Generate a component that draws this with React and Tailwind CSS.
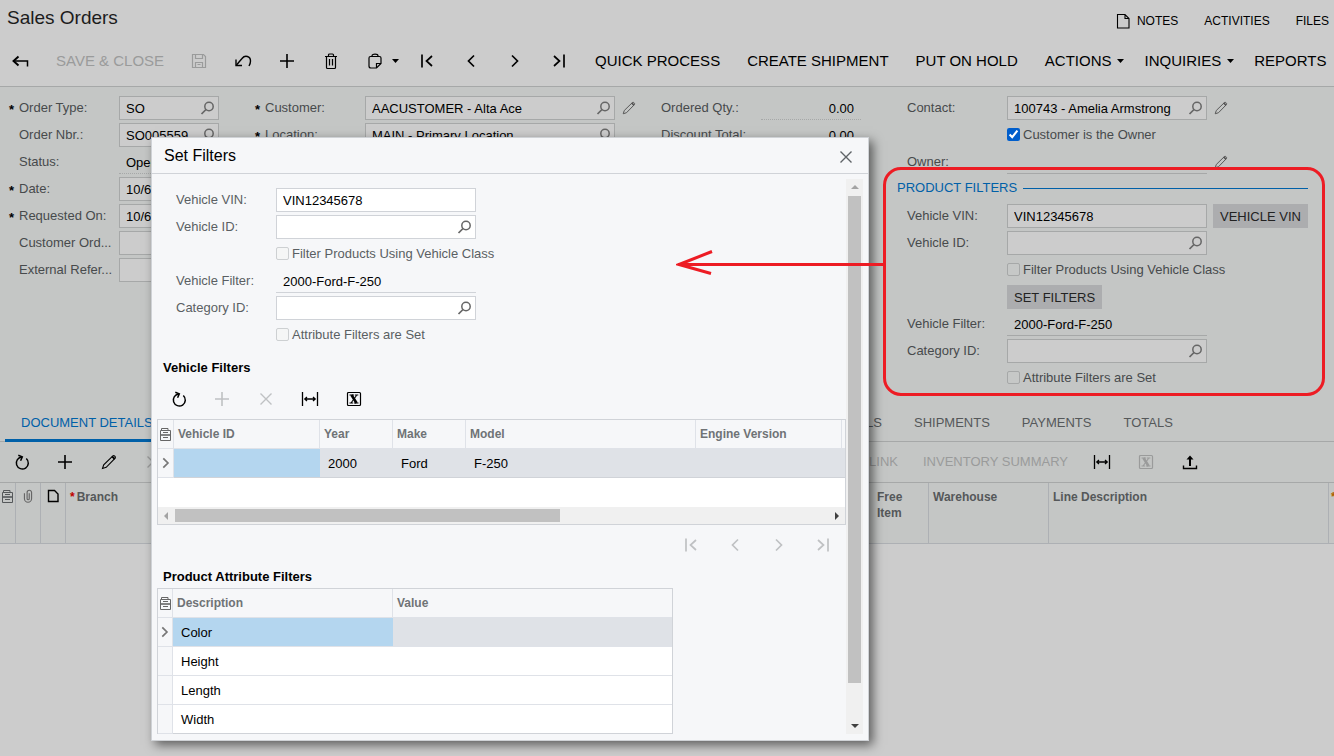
import React, { useId } from "react";

const ICONS = {
  back: (
    <>
      <path d="M2.500 9h14v5.500" strokeWidth="1.500" />
      <path d="M7.500 4.500L2.500 9l5 4.500" strokeWidth="1.900" />
    </>
  ),
  save: (
    <>
      <path d="M2.500 2.500h11l2 2v11h-13z" />
      <path d="M5.500 2.500v4h7v-4M5.500 15.500v-5h7v5M7.500 12.500h3" />
    </>
  ),
  undo: (
    <>
      <path d="M2 7.500v6h6" strokeWidth="1.400" />
      <path d="M2.500 13L8 6.500c3-3.800 8.500-2.300 8.500 2.500 0 2-.6 3.500-1.500 5" strokeWidth="1.400" />
    </>
  ),
  plus: <path d="M9 2v14M2 9h14" strokeWidth="1.600" />,
  trash: (
    <>
      <path d="M3 4.500h12M6.500 4.500V3a1 1 0 0 1 1-1h3a1 1 0 0 1 1 1v1.500M4.500 4.500v11a1 1 0 0 0 1 1h7a1 1 0 0 0 1-1v-11" />
      <path d="M7.500 7v6.500M10.500 7v6.500" />
    </>
  ),
  clipboard: (
    <>
      <path d="M6 4.500V3.800C6 1.500 12 1.500 12 3.800v.7zM6 4.500H4.500a1.500 1.500 0 0 0-1.500 1.500v8a2 2 0 0 0 2 2h5.500L15 11.500V6a1.500 1.500 0 0 0-1.500-1.500H12" />
      <path d="M10.500 16v-4.500H15" />
    </>
  ),
  first: <path d="M4 2.500v13M14 4L8.500 9l5.500 5" strokeWidth="1.700" />,
  prev: <path d="M12 3.500L6.500 9l5.500 5.500" strokeWidth="1.700" />,
  next: <path d="M6 3.500L11.500 9 6 14.500" strokeWidth="1.700" />,
  last: <path d="M14 2.500v13M4 4l5.500 5L4 14" strokeWidth="1.700" />,
  refresh: (
    <>
      <path d="M13.300 5.500A6 6 0 1 1 9 4" strokeWidth="1.500" />
      <path d="M5.300 2.300L9.300 3.900 7.600 7.800" strokeWidth="1.500" />
    </>
  ),
  pencil: (
    <>
      <path d="M2.500 15.500l1.200-3.700 9.200-9c1-.9 3.200 1.100 2.300 2.300L6.200 14.300z" strokeWidth="1.100" />
      <path d="M12 3.300l2.700 2.700" strokeWidth="1.800" />
    </>
  ),
  x: <path d="M3.500 3.500l11 11M14.500 3.500l-11 11" strokeWidth="1.400" />,
  fit: (
    <>
      <path d="M1.500 2v14M16.500 2v14" strokeWidth="1.300" />
      <path d="M3.500 9h11M6 7L3.800 9 6 11M12 7l2.200 2L12 11" strokeWidth="1.300" />
    </>
  ),
  excel: (
    <>
      <rect x="2.500" y="2.500" width="13" height="13" rx="1" strokeWidth="1.200" />
      <path d="M6.500 5l5 8" strokeWidth="2.600" />
      <path d="M11.500 5.500l-5.500 7.500M4.500 5h4.500M9.800 5h3.500M4.500 13h3.500M8.800 13h4.700" strokeWidth="1.100" />
    </>
  ),
  upload: (
    <>
      <path d="M2.500 12.500v3h13v-3" strokeWidth="1.400" />
      <path d="M9 13V4" strokeWidth="2" />
      <path d="M5.500 6.500L9 2.500l3.500 4z" fill="currentColor" stroke="none" />
    </>
  ),
  search: (
    <>
      <circle cx="11" cy="7.500" r="4.200" strokeWidth="1.500" />
      <path d="M8 10.500l-4.500 4.500" strokeWidth="1.700" />
    </>
  ),
  note: <path d="M3.500 2.500h7.500l4 4v9.500H3.500zM11 2.500v4h4" strokeWidth="1.100" />,
  page: <path d="M4.500 3.500h6l3.500 3.500v7.500H4.500z" strokeWidth="1.400" />,
  clip: <path d="M5 6v6a4 4 0 0 0 8 0V5a2.500 2.500 0 0 0-5 0v7a1.200 1.200 0 0 0 2.400 0V6" strokeWidth="1.300" />,
  mark: <path d="M5.500 3l6 6-6 6" strokeWidth="2.200" />,
};

function Icon({ name, className = "h-[18px] w-[18px]" }) {
  return (
    <svg viewBox="0 0 18 18" className={"shrink-0 " + className} fill="none" stroke="currentColor" strokeWidth="1.200" aria-hidden="true">
      {ICONS[name]}
    </svg>
  );
}

function ListIcon() {
  return (
    <svg viewBox="0 0 11 13" className="mx-auto h-[13px] w-[11px]" fill="none" stroke="currentColor" aria-hidden="true">
      <path d="M1.500 2.500v-2h6.500v2M.5 2.500h10v10H.5z" />
      <path d="M3 4.500h5M3 9.500h5" />
      <path d="M1 7h9" strokeWidth="1.600" />
    </svg>
  );
}

function Caret() {
  return (
    <svg viewBox="0 0 7 4" className="h-1 w-[7px] shrink-0" fill="currentColor" aria-hidden="true">
      <path d="M0 0h7L3.500 4z" />
    </svg>
  );
}

function IconButton({ name, label, tone = "", width = "w-11" }) {
  return (
    <button type="button" aria-label={label} className={"flex h-10 shrink-0 items-center justify-center " + width + " " + tone}>
      <Icon name={name} />
    </button>
  );
}

function TextButton({ children }) {
  return <button type="button" className="h-10 shrink-0 pr-[13px] pl-[14px]">{children}</button>;
}

function MenuButton({ children }) {
  return (
    <button type="button" className="flex h-10 shrink-0 items-center gap-[6px] pr-[6px] pl-[14px]">
      {children}
      <Caret />
    </button>
  );
}

const DIM = {
  box: "border-[#a6a8a8] bg-[#cccccc]",
  label: "text-[#474a4c]",
  line: "border-[#a6a8a8]",
  check: "border-[#a6a8a8] bg-[#c6c8c7]",
};
const LIGHT = {
  box: "border-[#d0d3d8] bg-white",
  label: "text-[#5a5f63]",
  line: "border-[#d0d3d8]",
  check: "border-[#cdd0d2] bg-[#f5f6f6]",
};

function Field({ label, value = "", theme = DIM, required, lookup, edit, plain, dotted, right, width = "w-[200px]", after }) {
  const id = useId();
  return (
    <div className="flex h-6 shrink-0 items-center">
      <span className="w-[10px] shrink-0 pt-1 leading-[18px] font-bold text-black">{required ? "*" : ""}</span>
      <label htmlFor={id} className={"w-[100px] shrink-0 pb-px whitespace-nowrap " + theme.label}>{label}</label>
      <div
        className={
          "flex h-6 shrink-0 items-center " + width + " " +
          (plain ? "border-b " + theme.line + (dotted ? " border-dotted" : "") : "border " + theme.box)
        }
      >
        <input
          id={id}
          defaultValue={value}
          readOnly={plain}
          className={"h-full w-full min-w-0 bg-transparent pt-px text-black outline-none " + (right ? "pr-[7px] text-right" : plain ? "pl-[7px]" : "pl-[6px]")}
        />
        {lookup && (
          <button type="button" aria-label={"Look up " + label} className="pr-[2px] text-[#666]">
            <Icon name="search" />
          </button>
        )}
      </div>
      {edit && (
        <button type="button" aria-label={"Edit " + label} className="ml-[6px] text-[#555]">
          <Icon name="pencil" className="h-4 w-4" />
        </button>
      )}
      {after}
    </div>
  );
}

function Check({ label, theme = DIM, checked }) {
  return (
    <label className={"flex h-6 shrink-0 items-center gap-[3px] pl-[110px] whitespace-nowrap " + theme.label}>
      <input
        type="checkbox"
        defaultChecked={checked}
        className={"mb-[2px] h-[13px] w-[13px] shrink-0 " + (checked ? "accent-[#005ecc]" : "appearance-none rounded-xs border " + theme.check)}
      />
      <span>{label}</span>
    </label>
  );
}

function Arrow({ dir, className }) {
  const d = { up: "M0 5l4-4 4 4z", down: "M0 2l4 4 4-4z", left: "M5 0L1 4l4 4z", right: "M2 0l4 4-4 4z" }[dir];
  return (
    <svg viewBox="0 0 8 8" className={"h-2 w-2 " + (className || "")} fill="currentColor" aria-hidden="true">
      <path d={d} />
    </svg>
  );
}

function SelectorCell({ active }) {
  return (
    <td className="border-r border-b border-[#dfe2e8] bg-[#f6f7f9] p-0 text-[#777]">
      {active && <Icon name="mark" className="mx-auto h-[14px] w-[14px]" />}
    </td>
  );
}

const headCell = "border-r border-b border-[#dfe2e8] py-0 pr-0 pl-1 text-left text-xs font-bold text-[#6f7376]";
const valueCell = "border-b border-[#d0d3d8] pt-px pr-0 pb-0 pl-2";

function VehicleTable() {
  return (
    <div className="flex h-[106px] flex-col border border-[#d0d3d8] bg-white">
      <table className="w-full table-fixed border-separate border-spacing-0">
        <colgroup>
          <col className="w-4" />
          <col className="w-[146px]" />
          <col className="w-[73px]" />
          <col className="w-[73px]" />
          <col className="w-[230px]" />
          <col className="w-[146px]" />
          <col />
        </colgroup>
        <thead>
          <tr className="h-[29px] bg-[#f6f7f9]">
            <th className="border-r border-b border-[#dfe2e8] p-0 text-[#666]"><ListIcon /></th>
            <th className={headCell}>Vehicle ID</th>
            <th className={headCell}>Year</th>
            <th className={headCell}>Make</th>
            <th className={headCell}>Model</th>
            <th className={headCell}>Engine Version</th>
            <th className="border-b border-[#dfe2e8] p-0"></th>
          </tr>
        </thead>
        <tbody>
          <tr className="h-[29px] bg-[#dfe2e7]">
            <SelectorCell active />
            <td className="border-b border-[#d0d3d8] bg-[#b4d6ef] p-0"></td>
            <td className={valueCell}>2000</td>
            <td className={valueCell}>Ford</td>
            <td className={valueCell}>F-250</td>
            <td className="border-b border-[#d0d3d8] p-0"></td>
            <td className="border-b border-[#d0d3d8] p-0"></td>
          </tr>
        </tbody>
      </table>
      <div className="mt-auto flex h-[17px] items-center bg-[#f0f0f0]">
        <div className="flex w-[17px] justify-center text-[#a3a3a3]"><Arrow dir="left" /></div>
        <div className="flex-1"><div className="h-[13px] w-[385px] bg-[#c1c1c1]" /></div>
        <div className="flex w-[17px] justify-center text-[#404040]"><Arrow dir="right" /></div>
      </div>
    </div>
  );
}

function AttributeTable() {
  return (
    <div className="w-[516px] border-x border-t border-[#d0d3d8] bg-white">
      <table className="w-full table-fixed border-separate border-spacing-0">
        <colgroup>
          <col className="w-[15px]" />
          <col className="w-[220px]" />
          <col />
        </colgroup>
        <thead>
          <tr className="h-[29px] bg-[#f6f7f9]">
            <th className="border-r border-b border-[#dfe2e8] p-0 text-[#666]"><ListIcon /></th>
            <th className={headCell}>Description</th>
            <th className="border-b border-[#dfe2e8] py-0 pr-0 pl-1 text-left text-xs font-bold text-[#6f7376]">Value</th>
          </tr>
        </thead>
        <tbody>
          {["Color", "Height", "Length", "Width"].map((name, i) => (
            <tr key={name} className="h-[29px]">
              <SelectorCell active={i === 0} />
              <td className={"border-b pt-px pr-0 pb-0 pl-2 " + (i === 0 ? "border-[#dfe2e8] bg-[#b4d6ef]" : i === 3 ? "border-[#d0d3d8]" : "border-[#dfe2e8]")}>{name}</td>
              <td className={"border-b p-0 " + (i === 0 ? "border-[#dfe2e8] bg-[#dfe2e7]" : i === 3 ? "border-[#d0d3d8]" : "border-[#dfe2e8]")}></td>
            </tr>
          ))}
        </tbody>
      </table>
    </div>
  );
}

function SetFiltersDialog() {
  return (
    <section
      role="dialog"
      aria-label="Set Filters"
      className="absolute top-[137px] left-[151px] w-[718px] border border-[#cfd2d6] bg-[#f6f7f9] shadow-[4px_4px_10px_rgba(0,0,0,0.55)]"
    >
      <header className="flex h-9 items-center justify-between border-b border-[#d0d3d8] pr-[13px] pl-3">
        <h2 className="pt-px text-base text-black">Set Filters</h2>
        <button type="button" aria-label="Close" className="pt-[3px] text-[#5f6367]"><Icon name="x" /></button>
      </header>
      <div className="flex px-[5px] pt-[5px] pb-[6px]">
        <div className="min-w-0 flex-1">
          <div className="flex flex-col gap-[3px] pt-[9px] pl-[9px]">
            <Field theme={LIGHT} label="Vehicle VIN:" value="VIN12345678" />
            <Field theme={LIGHT} label="Vehicle ID:" lookup />
            <Check theme={LIGHT} label="Filter Products Using Vehicle Class" />
            <Field theme={LIGHT} label="Vehicle Filter:" value="2000-Ford-F-250" plain />
            <Field theme={LIGHT} label="Category ID:" lookup />
            <Check theme={LIGHT} label="Attribute Filters are Set" />
          </div>
          <h3 className="mt-[9px] flex h-[23px] items-center pl-[6px] font-bold text-black">Vehicle Filters</h3>
          <div className="flex text-black">
            <IconButton name="refresh" label="Refresh" width="w-[43px]" />
            <IconButton name="plus" label="Add row" tone="text-[#bfc1c3]" />
            <IconButton name="x" label="Delete row" tone="text-[#bfc1c3]" />
            <IconButton name="fit" label="Fit to screen" />
            <IconButton name="excel" label="Export to Excel" />
          </div>
          <VehicleTable />
          <div className="flex justify-end pr-px text-[#bfc1c3]">
            <IconButton name="first" label="First page" />
            <IconButton name="prev" label="Previous page" />
            <IconButton name="next" label="Next page" />
            <IconButton name="last" label="Last page" />
          </div>
          <h3 className="flex h-[23px] items-center pl-[6px] font-bold text-black">Product Attribute Filters</h3>
          <AttributeTable />
        </div>
        <div className="flex w-[17px] flex-col items-center bg-[#f0f0f0]">
          <div className="flex h-[17px] items-center text-[#a3a3a3]"><Arrow dir="up" /></div>
          <div className="h-[487px] w-[13px] bg-[#c1c1c1]" />
          <div className="mt-auto flex h-[17px] items-center text-[#404040]"><Arrow dir="down" /></div>
        </div>
      </div>
    </section>
  );
}

function GrayButton({ children, className = "" }) {
  return <button type="button" className={"h-6 shrink-0 bg-[#acadaf] px-[7px] pt-px whitespace-nowrap text-[#222] " + className}>{children}</button>;
}

const gridHead = "border-r border-b border-[#adb0b4] pt-[6px] pr-0 pb-0 pl-1 text-left align-top text-xs leading-4 font-bold text-[#55585a]";

export default function App() {
  return (
    <main className="relative min-h-screen overflow-hidden bg-[#cccccc] font-['Liberation_Sans',Arial,sans-serif] text-[13px] leading-[18px] text-black">
      <header className="border-b border-[#a6a8a8]">
        <div className="flex h-9 items-center justify-between pl-[7px]">
          <h1 className="text-[19px] text-[#1c1c1c]">Sales Orders</h1>
          <nav className="flex gap-[26px] pt-[6px] pr-[5px] text-xs">
            <a href="#notes" className="flex items-center gap-[5px]"><Icon name="note" />NOTES</a>
            <a href="#activities" className="flex items-center">ACTIVITIES</a>
            <a href="#files" className="flex items-center">FILES</a>
          </nav>
        </div>
        <div className="flex h-[50px] items-center text-[15px]">
          <IconButton name="back" label="Back" width="w-10" />
          <button type="button" className="h-10 shrink-0 pr-[13px] pl-4 text-[#9a9b9b]">SAVE &amp; CLOSE</button>
          <IconButton name="save" label="Save" tone="text-[#9a9b9b]" />
          <IconButton name="undo" label="Undo" />
          <IconButton name="plus" label="Add" />
          <IconButton name="trash" label="Delete" />
          <button type="button" aria-label="Copy and paste" className="flex h-10 w-[52px] shrink-0 items-center gap-2 pl-[13px]">
            <Icon name="clipboard" />
            <Caret />
          </button>
          <IconButton name="first" label="First" />
          <IconButton name="prev" label="Previous" />
          <IconButton name="next" label="Next" />
          <IconButton name="last" label="Last" />
          <TextButton>QUICK PROCESS</TextButton>
          <TextButton>CREATE SHIPMENT</TextButton>
          <TextButton>PUT ON HOLD</TextButton>
          <MenuButton>ACTIONS</MenuButton>
          <MenuButton>INQUIRIES</MenuButton>
          <TextButton>REPORTS</TextButton>
        </div>
      </header>

      <section className="bg-[#c4c6c5]">
        <form className="flex pt-[9px] pl-[9px]" onSubmit={(e) => e.preventDefault()}>
          <div className="flex w-[246px] shrink-0 flex-col gap-[3px]">
            <Field label="Order Type:" value="SO" required lookup width="w-[100px]" />
            <Field label="Order Nbr.:" value="SO005559" lookup width="w-[100px]" />
            <Field label="Status:" value="Open" plain dotted width="w-[100px]" />
            <Field label="Date:" value="10/6/2020" required width="w-[100px]" />
            <Field label="Requested On:" value="10/6/2020" required width="w-[100px]" />
            <Field label="Customer Ord..." width="w-[100px]" />
            <Field label="External Refer..." width="w-[100px]" />
          </div>
          <div className="flex w-[396px] shrink-0 flex-col gap-[3px]">
            <Field label="Customer:" value="AACUSTOMER - Alta Ace" required lookup edit width="w-[250px]" />
            <Field label="Location:" value="MAIN - Primary Location" required lookup width="w-[250px]" />
          </div>
          <div className="flex w-[246px] shrink-0 flex-col gap-[3px]">
            <Field label="Ordered Qty.:" value="0.00" plain dotted right width="w-[100px]" />
            <Field label="Discount Total:" value="0.00" plain dotted right width="w-[100px]" />
          </div>
          <div className="flex w-[411px] shrink-0 flex-col gap-[3px]">
            <Field label="Contact:" value="100743 - Amelia Armstrong" lookup edit />
            <Check label="Customer is the Owner" checked />
            <Field label="Owner:" plain edit />
            <div className="flex h-6 items-center gap-[6px] text-[#0060a8]">
              <h2 className="pb-[3px]">PRODUCT FILTERS</h2>
              <span className="mb-px h-px flex-1 bg-[#0060a8]" />
            </div>
            <Field label="Vehicle VIN:" value="VIN12345678" after={<GrayButton className="ml-[6px]">VEHICLE VIN</GrayButton>} />
            <Field label="Vehicle ID:" lookup />
            <Check label="Filter Products Using Vehicle Class" />
            <div className="flex pl-[110px]"><GrayButton>SET FILTERS</GrayButton></div>
            <Field label="Vehicle Filter:" value="2000-Ford-F-250" plain />
            <Field label="Category ID:" lookup />
            <Check label="Attribute Filters are Set" />
          </div>
        </form>

        <nav className="mt-3 flex h-10 border-b border-[#a6a8a8] pl-[5px] text-[#55585a]">
          <div className="flex w-[893px] shrink-0 justify-between">
            <button type="button" className="-mb-px border-b-3 border-[#0060a8] px-4 pt-1 text-[#0060a8]">DOCUMENT DETAILS</button>
            <button type="button" className="px-4 pt-[2px]">DISCOUNT DETAILS</button>
          </div>
          <button type="button" className="px-4 pt-[2px]">SHIPMENTS</button>
          <button type="button" className="px-4 pt-[2px]">PAYMENTS</button>
          <button type="button" className="px-4 pt-[2px]">TOTALS</button>
        </nav>

        <div className="flex h-[41px] items-center border-b border-[#a6a8a8] text-[#9a9b9b]">
          <div className="flex w-[911px] shrink-0 items-center">
            <IconButton name="refresh" label="Refresh" tone="text-black" width="w-[43px]" />
            <IconButton name="plus" label="Add row" tone="text-black" />
            <IconButton name="pencil" label="Edit row" tone="text-black" />
            <IconButton name="x" label="Delete row" />
            <button type="button" className="ml-auto h-10 px-[13px]">PO LINK</button>
          </div>
          <button type="button" className="h-10 px-[12px]">INVENTORY SUMMARY</button>
          <IconButton name="fit" label="Fit to screen" tone="text-black" />
          <IconButton name="excel" label="Export to Excel" />
          <IconButton name="upload" label="Load records" tone="text-black" />
        </div>

        <table className="w-full table-fixed border-separate border-spacing-0">
          <colgroup>
            <col className="w-4" />
            <col className="w-[25px]" />
            <col className="w-[25px]" />
            <col className="w-[807px]" />
            <col className="w-14" />
            <col className="w-[120px]" />
            <col className="w-[280px]" />
            <col />
          </colgroup>
          <thead>
            <tr className="h-[61px]">
              <th className="border-r border-b border-[#adb0b4] p-0 pt-[7px] align-top text-[#55585a]"><ListIcon /></th>
              <th className="border-r border-b border-[#adb0b4] p-0 pt-[5px] align-top text-[#666]"><Icon name="clip" className="mx-auto h-4 w-4" /></th>
              <th className="border-r border-b border-[#adb0b4] p-0 pt-1 align-top"><Icon name="page" className="mx-auto h-[18px] w-[18px]" /></th>
              <th className={gridHead + " border-r-0"}><span className="pr-[2px] text-[#c00000]">*</span>Branch</th>
              <th className={gridHead}>Free<br />Item</th>
              <th className={gridHead}>Warehouse</th>
              <th className={gridHead}>Line Description</th>
              <th className="border-b border-[#adb0b4] p-0 pt-[6px] pl-[2px] text-left align-top text-xs leading-4 text-[#b06000]">*</th>
            </tr>
          </thead>
        </table>
      </section>

      <SetFiltersDialog />

      <div className="pointer-events-none absolute top-[167px] left-[883px] h-[229px] w-[442px] rounded-[18px] border-3 border-[#ed1c24]" />
      <svg viewBox="0 0 210 30" className="pointer-events-none absolute top-[249px] left-[676px] h-[30px] w-[210px]" fill="none" stroke="#ed1c24" strokeWidth="3" aria-hidden="true">
        <path d="M2 15.500h206M36 2.500L3 15.500l32 9" />
      </svg>
    </main>
  );
}
